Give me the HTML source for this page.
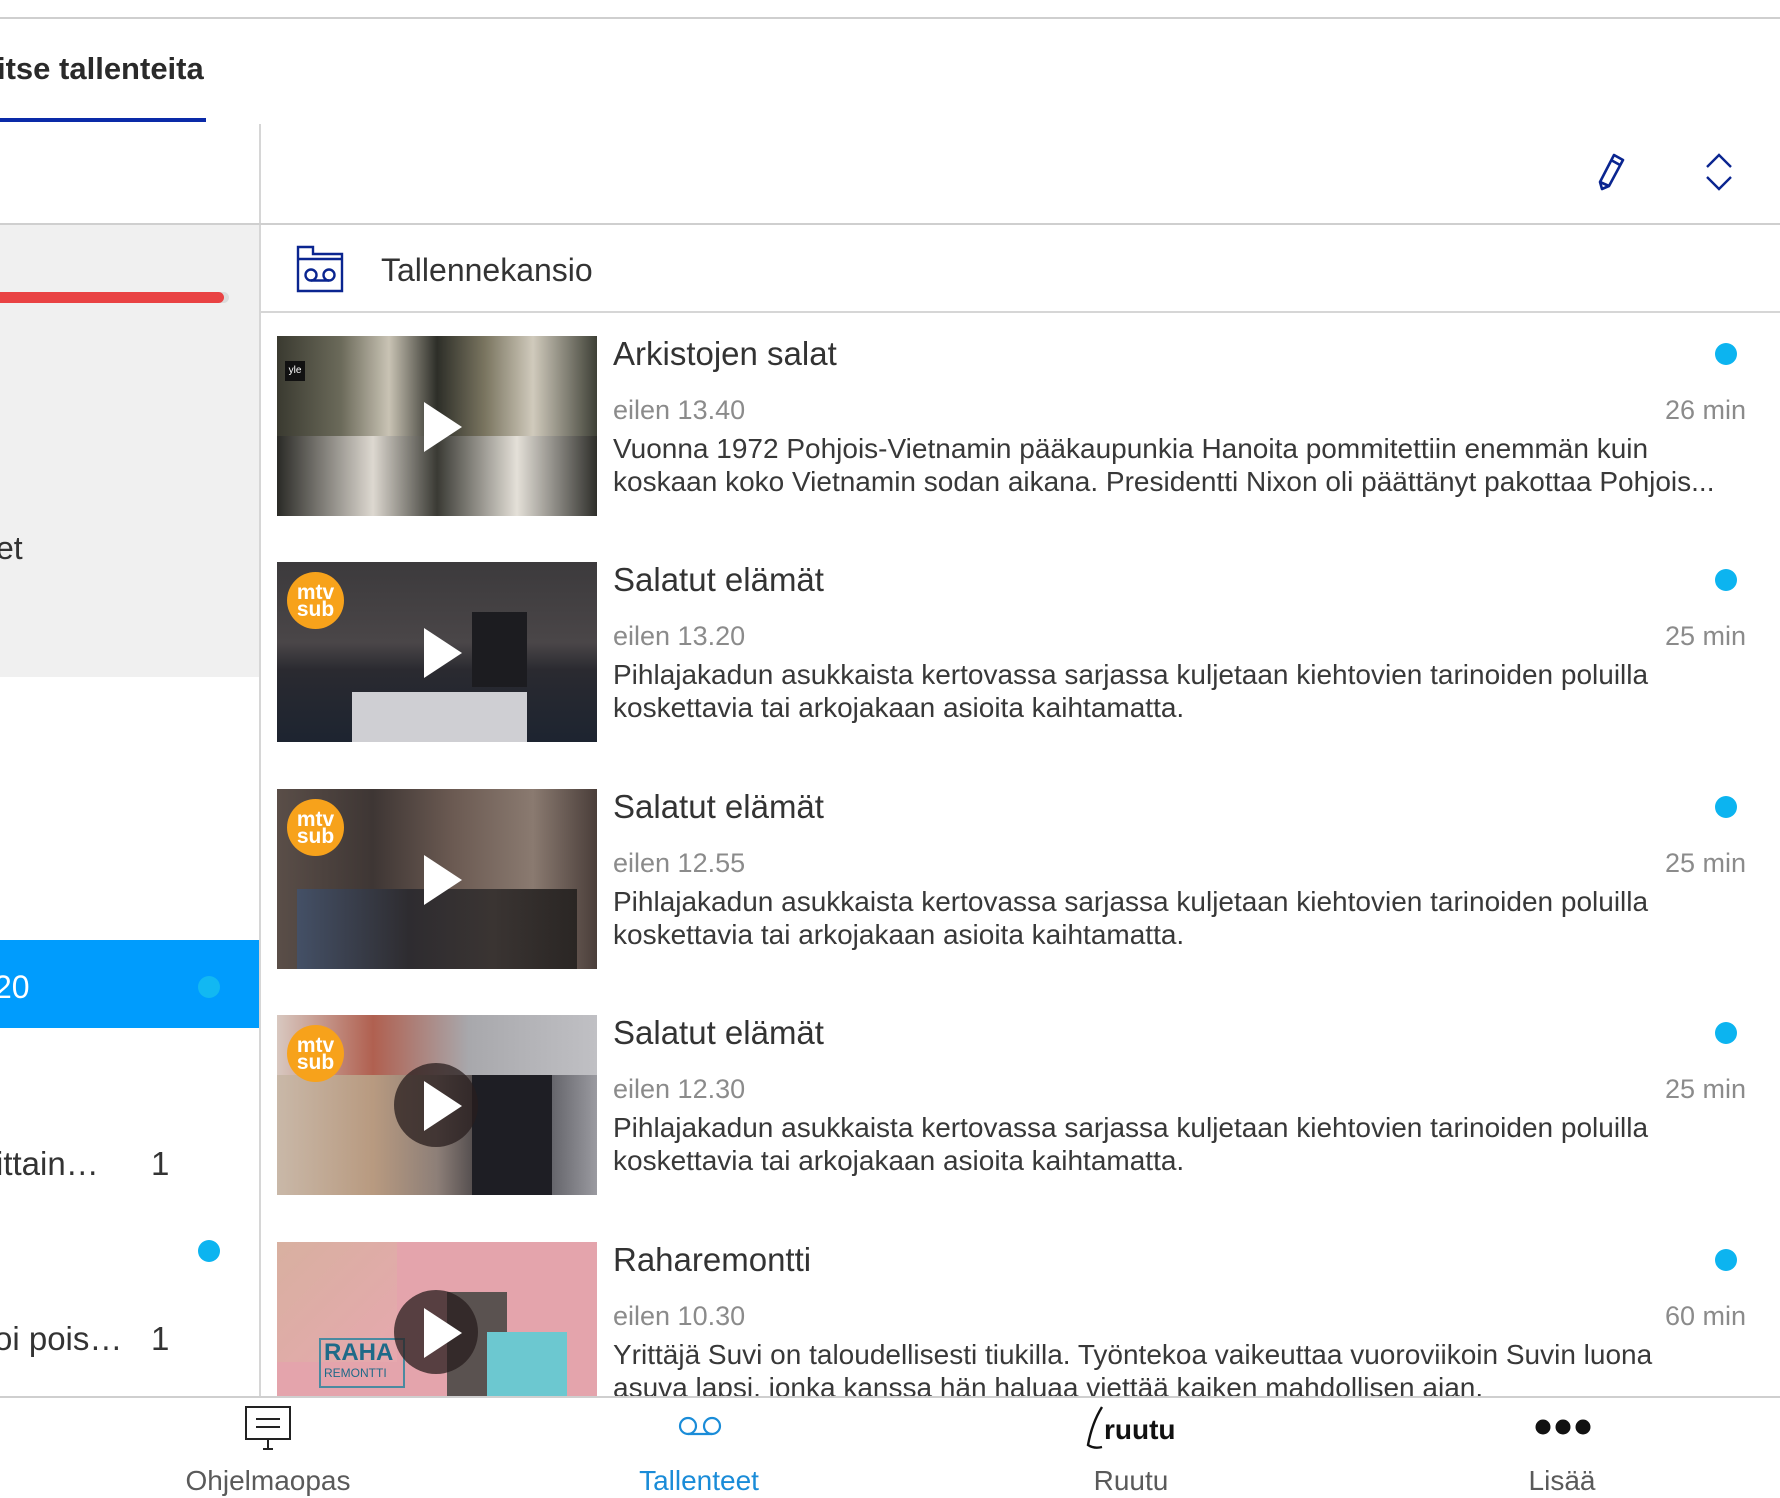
<!DOCTYPE html>
<html><head><meta charset="utf-8"><style>
*{margin:0;padding:0;box-sizing:border-box}
body{width:1780px;height:1498px;overflow:hidden;background:#fff;font-family:"Liberation Sans",sans-serif;position:relative;color:#333}
.a{position:absolute;white-space:nowrap}
.thumb{position:absolute;left:277px;width:320px;height:180px;overflow:hidden}
.play{position:absolute;left:147px;top:66px;width:0;height:0;border-left:38px solid #fff;border-top:25px solid transparent;border-bottom:25px solid transparent}
.circ{position:absolute;left:117px;top:48px;width:84px;height:84px;border-radius:50%;background:rgba(40,30,30,.75)}
.mtv{position:absolute;left:10px;top:10px;width:57px;height:57px;border-radius:50%;background:#f7a21b;color:#fff;font-weight:bold;text-align:center;font-size:21px;line-height:17px;padding-top:12px}
.t{font-size:33px;line-height:40px;color:#333;left:613px}
.d{font-size:27px;line-height:34px;color:#8b8b8b;left:613px}
.du{font-size:27px;line-height:34px;color:#8b8b8b;right:34px;text-align:right}
.ds{font-size:28px;line-height:33px;color:#383838;left:613px}
.dot{position:absolute;width:22px;height:22px;border-radius:50%;background:#0cb4f0}
.nl{position:absolute;top:1464px;font-size:28px;line-height:34px;color:#5a5a5a;text-align:center;width:300px}
</style></head><body>
<div class="a" style="left:0;top:17px;width:1780px;height:2px;background:#cfcfcf"></div>
<div class="a" style="left:-3px;top:51px;font-size:31px;line-height:36px;font-weight:bold;color:#2a2a2a">itse tallenteita</div>
<div class="a" style="left:0;top:118px;width:206px;height:4px;background:#0a2aa8"></div>
<div class="a" style="left:259px;top:124px;width:2px;height:1274px;background:#d6d6d6"></div>
<div class="a" style="left:0;top:223px;width:1780px;height:2px;background:#cfcfcf"></div>
<div class="a" style="left:0;top:225px;width:259px;height:452px;background:#f0f0f0"></div>
<div class="a" style="left:0;top:292px;width:229px;height:11px;border-radius:6px;background:#dcdcdc"></div>
<div class="a" style="left:0;top:292px;width:224px;height:11px;border-radius:0 6px 6px 0;background:#e94243"></div>
<div class="a" style="left:-4px;top:529px;font-size:32px;line-height:38px;color:#333">et</div>
<div class="a" style="left:0;top:940px;width:259px;height:88px;background:#009cfd"></div>
<div class="a" style="left:-6px;top:968px;font-size:32px;line-height:38px;color:#fff">20</div>
<div class="dot" style="left:198px;top:976px;background:#12b8f2"></div>
<div class="a" style="left:-4px;top:1145px;font-size:33px;line-height:38px;color:#333">ittain…</div>
<div class="a" style="left:151px;top:1145px;font-size:33px;line-height:38px;color:#333">1</div>
<div class="dot" style="left:198px;top:1240px"></div>
<div class="a" style="left:-6px;top:1320px;font-size:33px;line-height:38px;color:#333">oi pois…</div>
<div class="a" style="left:151px;top:1320px;font-size:33px;line-height:38px;color:#333">1</div>
<svg class="a" style="left:1596px;top:150px" width="40" height="44" viewBox="0 0 40 44"><g fill="none" stroke="#0a2590" stroke-width="2.6" stroke-linejoin="round"><path d="M18 5 L27 10 L13 36 L6 39 L4 32 Z"/><path d="M15 10 L24 15"/><path d="M4 32 L13 36"/></g></svg>
<svg class="a" style="left:1704px;top:152px" width="30" height="40" viewBox="0 0 30 40"><g fill="none" stroke="#0a2590" stroke-width="2.4"><path d="M3 15 L15 3 L27 15"/><path d="M3 25 L15 37 L27 25"/></g></svg>
<svg class="a" style="left:296px;top:245px" width="48" height="48" viewBox="0 0 48 48"><g fill="none" stroke="#0a2590" stroke-width="2.4"><path d="M2 46 V2 H17 V9 H46 V46 Z"/><path d="M2 14 H46"/><circle cx="15" cy="30" r="5.5"/><circle cx="33" cy="30" r="5.5"/><path d="M15 35.5 H33"/></g></svg>
<div class="a" style="left:381px;top:250px;font-size:32px;line-height:40px;color:#333">Tallennekansio</div>
<div class="a" style="left:261px;top:311px;width:1519px;height:2px;background:#d6d6d6"></div>

<div class="thumb" style="top:336px;background:linear-gradient(90deg,#3a3a30 0%,#6b6a5a 20%,#c9c3b4 35%,#2d2e28 50%,#7a7560 65%,#d0cabc 80%,#3e4036 100%)">
<div style="position:absolute;left:0;top:100px;width:320px;height:80px;background:linear-gradient(90deg,#2a2a26,#ddd8d0 30%,#3a3a34 50%,#e4e0d8 75%,#2e2e2a)"></div>
<div style="position:absolute;left:8px;top:25px;width:20px;height:20px;background:#111;color:#fff;font-size:10px;line-height:20px;text-align:center">yle</div>
<div class="play"></div></div>
<div class="a t" style="top:334px">Arkistojen salat</div>
<div class="a d" style="top:393px">eilen 13.40</div>
<div class="a du" style="top:393px">26 min</div>
<div class="a ds" style="top:432px">Vuonna 1972 Pohjois-Vietnamin pääkaupunkia Hanoita pommitettiin enemmän kuin<br>koskaan koko Vietnamin sodan aikana. Presidentti Nixon oli päättänyt pakottaa Pohjois...</div>
<div class="dot" style="left:1715px;top:343px"></div>

<div class="thumb" style="top:562px;background:linear-gradient(180deg,#3c3a3c 0%,#4a4648 45%,#2a2a30 60%,#1d2430 100%)">
<div style="position:absolute;left:75px;top:130px;width:175px;height:50px;background:#cfcfd3"></div>
<div style="position:absolute;left:195px;top:50px;width:55px;height:75px;background:#1c1c20"></div>
<div class="mtv">mtv<br>sub</div><div class="play"></div></div>
<div class="a t" style="top:560px">Salatut elämät</div>
<div class="a d" style="top:619px">eilen 13.20</div>
<div class="a du" style="top:619px">25 min</div>
<div class="a ds" style="top:658px">Pihlajakadun asukkaista kertovassa sarjassa kuljetaan kiehtovien tarinoiden poluilla<br>koskettavia tai arkojakaan asioita kaihtamatta.</div>
<div class="dot" style="left:1715px;top:569px"></div>

<div class="thumb" style="top:789px;background:linear-gradient(90deg,#5a4e48 0%,#3e3634 30%,#6b5a52 55%,#8a7a70 80%,#4a3e3a 100%)">
<div style="position:absolute;left:20px;top:100px;width:280px;height:80px;background:linear-gradient(90deg,#445066,#2e2c30 40%,#3a3432 70%,#2a2624)"></div>
<div class="mtv">mtv<br>sub</div><div class="play"></div></div>
<div class="a t" style="top:787px">Salatut elämät</div>
<div class="a d" style="top:846px">eilen 12.55</div>
<div class="a du" style="top:846px">25 min</div>
<div class="a ds" style="top:885px">Pihlajakadun asukkaista kertovassa sarjassa kuljetaan kiehtovien tarinoiden poluilla<br>koskettavia tai arkojakaan asioita kaihtamatta.</div>
<div class="dot" style="left:1715px;top:796px"></div>

<div class="thumb" style="top:1015px;background:linear-gradient(90deg,#c9b8a8 0%,#b89a80 30%,#8d7f78 50%,#2a2a30 70%,#9a9aa0 100%)">
<div style="position:absolute;left:0;top:0;width:320px;height:60px;background:linear-gradient(90deg,#d8c8c0,#b06050 30%,#a8a8ac 60%,#c0c0c4)"></div>
<div style="position:absolute;left:195px;top:60px;width:80px;height:120px;background:#1e1e24"></div>
<div class="mtv">mtv<br>sub</div><div class="circ"></div><div class="play"></div></div>
<div class="a t" style="top:1013px">Salatut elämät</div>
<div class="a d" style="top:1072px">eilen 12.30</div>
<div class="a du" style="top:1072px">25 min</div>
<div class="a ds" style="top:1111px">Pihlajakadun asukkaista kertovassa sarjassa kuljetaan kiehtovien tarinoiden poluilla<br>koskettavia tai arkojakaan asioita kaihtamatta.</div>
<div class="dot" style="left:1715px;top:1022px"></div>

<div class="thumb" style="top:1242px;background:#e4a4ac">
<div style="position:absolute;left:0;top:0;width:120px;height:120px;background:linear-gradient(135deg,#d8b0a0,#e6a8ae)"></div>
<div style="position:absolute;left:42px;top:96px;width:86px;height:50px;border:2px solid #4a8aa0;color:#1e6a88;font-weight:bold;font-size:24px;line-height:26px;padding-left:3px">RAHA<div style="font-size:12px;font-weight:normal;line-height:14px">REMONTTI</div></div>
<div style="position:absolute;left:170px;top:50px;width:60px;height:130px;background:#5a5250"></div>
<div style="position:absolute;left:210px;top:90px;width:80px;height:90px;background:#6cc8d0"></div>
<div class="circ"></div><div class="play"></div></div>
<div class="a t" style="top:1240px">Raharemontti</div>
<div class="a d" style="top:1299px">eilen 10.30</div>
<div class="a du" style="top:1299px">60 min</div>
<div class="a ds" style="top:1338px">Yrittäjä Suvi on taloudellisesti tiukilla. Työntekoa vaikeuttaa vuoroviikoin Suvin luona<br>asuva lapsi, jonka kanssa hän haluaa viettää kaiken mahdollisen ajan.</div>
<div class="dot" style="left:1715px;top:1249px"></div>

<div class="a" style="left:0;top:1396px;width:1780px;height:102px;background:#fff;border-top:2px solid #cfcfcf"></div>
<svg class="a" style="left:244px;top:1405px" width="48" height="46" viewBox="0 0 48 46"><g fill="none" stroke="#222" stroke-width="2"><rect x="2" y="2" width="44" height="32"/><path d="M12 14 H36 M12 22 H36 M24 34 V44 M19 44 H29"/></g></svg>
<svg class="a" style="left:676px;top:1416px" width="48" height="22" viewBox="0 0 48 22"><g fill="none" stroke="#1a8cd8" stroke-width="2.2"><circle cx="12" cy="10" r="8"/><circle cx="36" cy="10" r="8"/><path d="M12 18 H36"/></g></svg>
<svg class="a" style="left:1084px;top:1405px" width="100" height="46" viewBox="0 0 100 46"><path d="M18 2 Q8 18 4 40 Q10 44 18 42" fill="none" stroke="#111" stroke-width="2.4"/><text x="20" y="34" font-family="Liberation Sans" font-weight="bold" font-size="28" fill="#111">ruutu</text></svg>
<svg class="a" style="left:1535px;top:1416px" width="56" height="22" viewBox="0 0 56 22"><circle cx="8" cy="11" r="7.5" fill="#111"/><circle cx="28" cy="11" r="7.5" fill="#111"/><circle cx="48" cy="11" r="7.5" fill="#111"/></svg>
<div class="nl" style="left:118px">Ohjelmaopas</div>
<div class="nl" style="left:549px;color:#1a8cd8">Tallenteet</div>
<div class="nl" style="left:981px">Ruutu</div>
<div class="nl" style="left:1412px">Lisää</div>
</body></html>
